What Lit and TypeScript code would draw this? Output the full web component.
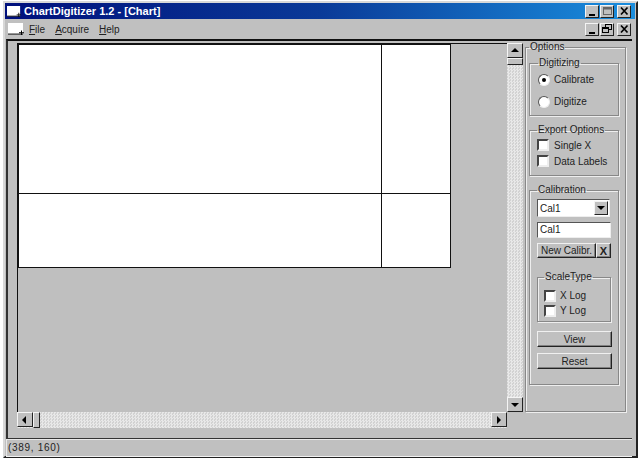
import { LitElement, html, css, svg } from "lit";
import { customElement } from "lit/decorators.js";

const winIcon = (w: number, h: number) => html`<svg class="appicon" width="${w}" height="${h}" viewBox="0 0 16 13" preserveAspectRatio="none">
  <rect x="0" y="0" width="15" height="12" fill="#fff"/>
  <path d="M0 12H15" stroke="#222" stroke-width="1.2"/>
  <path d="M11 10h2V8h1v2h2v1h-2v2h-1v-2h-2z" fill="#000"/>
</svg>`;

const glyph = (k: string) => {
  if (k === "min") return svg`<rect x="2" y="8" width="6" height="2" fill="#000"/>`;
  if (k === "max") return svg`<rect x="1.5" y="1.5" width="8" height="7" fill="none" stroke="#666"/><rect x="1.5" y="1.5" width="8" height="2" fill="#666"/>`;
  if (k === "restore") return svg`<rect x="3.5" y="0.5" width="6" height="5" fill="none" stroke="#000"/><rect x="0.5" y="3.5" width="6" height="5" fill="#c0c0c0" stroke="#000"/><rect x="0.5" y="3.5" width="6" height="1.5" fill="#000"/>`;
  return svg`<path d="M2 1.5L8.5 8.5M8.5 1.5L2 8.5" stroke="#000" stroke-width="1.7" fill="none"/>`;
};

const capBtn = (k: string) => html`<span class="cap raised ${k === "close" ? "gapl" : ""}"><svg width="11" height="10" viewBox="0 0 11 10">${glyph(k)}</svg></span>`;

const arrow = (d: string) => {
  const p: Record<string, string> = { up: "M4 1L0 5H8Z", down: "M0 2H8L4 6Z", left: "M5 0V8L1 4Z", right: "M2 0V8L6 4Z" };
  return html`<svg width="8" height="8" viewBox="0 0 8 8"><path d="${p[d]}" fill="#000"/></svg>`;
};

@customElement("app-root")
export class AppRoot extends LitElement {
  static styles = css`
    :host { display: block; width: 640px; height: 463px; background: #fff; overflow: hidden;
      font-family: "Liberation Sans", Arial, sans-serif; font-size: 10px; color: #222; }
    .window { box-sizing: border-box; height: 457px; margin: 1px 0 0 3px; width: 635px; background: #c0c0c0;
      border: 2px solid; border-color: #d8d8d8 #222 #222 #d8d8d8; display: flex; flex-direction: column; }
    .title { height: 16px; flex: none; background: linear-gradient(90deg, #00107c 0%, #0a3a98 50%, #1a8ede 100%);
      display: flex; align-items: center; padding: 0 4px 0 2px; margin-right: 1px; color: #fff; font-size: 11px; font-weight: 700; }
    .title .name { margin-left: 3px; flex: 1; }
    .appicon { flex: none; }
    .caps { display: flex; gap: 1px; }
    .cap { box-sizing: border-box; width: 14px; height: 13px; display: flex; align-items: center; justify-content: center; background: #c0c0c0; }
    .gapl { margin-left: 2px; }
    .raised { border: 1px solid; border-color: #f4f4f4 #222 #222 #f4f4f4; }
    .menu { height: 20px; flex: none; display: flex; align-items: center; padding: 0 5px 0 3px; }
    .menu .item { margin: 0 5px; }
    .menu .spacer { flex: 1; }
    .body { flex: 1; min-height: 0; display: flex; border-top: 2px solid #111; border-left: 2px solid #333; margin: 0 4px 0 1px; }
    .client { flex: none; box-sizing: border-box; width: 515px; display: flex; flex-direction: column; padding: 2px 0 0 9px; }
    .upper { flex: none; height: 369px; display: flex; }
    .canvas { flex: none; box-sizing: border-box; width: 490px; height: 369px; border: 1px solid #111; border-right: none; border-bottom: none; background: #bfbfbf; }
    .chart { box-sizing: border-box; width: 433px; height: 224px; background: #fff; border: 1px solid #111; display: grid; grid-template-columns: 363px 1fr; grid-template-rows: 149px 1fr; }
    .cell-a { border-right: 1px solid #111; border-bottom: 1px solid #111; }
    .cell-b { border-bottom: 1px solid #111; }
    .cell-c { border-right: 1px solid #111; }
    .vbar { flex: none; width: 16px; height: 369px; display: flex; flex-direction: column; background: repeating-conic-gradient(#e8e8e8 0 25%, #d2d2d2 0 50%) 0 0 / 3px 3px; }
    .sbtn { box-sizing: border-box; width: 16px; height: 15px; background: #c0c0c0; display: flex; align-items: center; justify-content: center; flex: none; }
    .vbar .thumb { box-sizing: border-box; height: 7px; width: 16px; background: #c0c0c0; flex: none; }
    .vbar .fill { flex: 1; }
    .hbar { flex: none; width: 490px; height: 16px; display: flex; background: repeating-conic-gradient(#e8e8e8 0 25%, #d2d2d2 0 50%) 0 0 / 3px 3px; }
    .hbar .thumb { box-sizing: border-box; width: 7px; height: 16px; background: #c0c0c0; flex: none; }
    .hbar .fill { flex: 1; }
    .options { flex: none; width: 101px; margin-left: 2px; }
    fieldset { box-sizing: border-box; border: 1px solid #888; box-shadow: 1px 1px 0 #eee, inset 1px 1px 0 #eee; margin: 0; padding: 0; min-width: 0; }
    legend { padding: 0 1px; margin-left: 0; line-height: 12px; white-space: nowrap; }
    .outer { height: 371px; padding: 4px 0 0 3px; width: 101px; }
    .dig { width: 90px; height: 59px; padding-left: 8px; }
    .exp { width: 90px; height: 52px; padding-left: 7px; margin-top: 8px; }
    .cal { width: 90px; height: 201px; padding-left: 7px; margin-top: 8px; }
    .row { display: flex; align-items: center; gap: 5px; white-space: nowrap; }
    .radio { box-sizing: border-box; width: 12px; height: 12px; border-radius: 50%; background: #fff; border: 1px solid; border-color: #555 #eee #eee #555; display: flex; align-items: center; justify-content: center; flex: none; }
    .radio i { width: 4px; height: 4px; background: #000; border-radius: 50%; }
    .check { box-sizing: border-box; width: 12px; height: 12px; background: #fff; border: 2px solid; border-color: #444 #eee #eee #444; flex: none; }
    .dig .row { height: 19px; gap: 4px; }
    .dig .r1 { margin-top: 1px; }
    .dig .r2 { margin-top: 3px; }
    .exp .row { height: 16px; }
    .exp .row:first-of-type { margin-top: 1px; }
    .combo { box-sizing: border-box; width: 73px; height: 18px; background: #fff; border: 1px solid; border-color: #555 #eee #eee #555; display: flex; align-items: center; padding-left: 2px; margin-top: 3px; }
    .combo span { flex: 1; }
    .combo .cb { box-sizing: border-box; flex: none; width: 14px; height: 14px; background: #c0c0c0; border: 1px solid; border-color: #f4f4f4 #222 #222 #f4f4f4; display: flex; align-items: center; justify-content: center; margin-right: 1px; }
    .input { box-sizing: border-box; width: 74px; height: 16px; background: #fff; border: 1px solid; border-color: #555 #eee #eee #555; padding-left: 2px; line-height: 14px; margin-top: 5px; }
    .btnrow { display: flex; margin-top: 5px; }
    .btn { box-sizing: border-box; background: #c0c0c0; border: 1px solid; border-color: #f0f0f0 #222 #222 #f0f0f0; box-shadow: inset -1px -1px 0 #808080; display: flex; align-items: center; justify-content: center; white-space: nowrap; }
    .btn.new { width: 59px; height: 15px; }
    .btn.x { width: 15px; height: 15px; font-weight: 700; font-size: 11px; }
    .scale { width: 74px; height: 51px; margin-top: 13px; padding-left: 6px; }
    .scale .row { height: 15px; gap: 4px; }
    .scale .row:first-of-type { margin-top: 5px; }
    .btn.wide { width: 75px; height: 16px; }
    .btn.view { margin-top: 9px; }
    .btn.reset { margin-top: 6px; }
    .status { height: 17px; flex: none; margin: 0 4px 0 1px; border-top: 1px solid #333; display: flex; align-items: center; padding-left: 2px; letter-spacing: 0.7px; box-shadow: inset 1px 1px 0 #e8e8e8, 0 1px 0 #f2f2f2; }
  `;

  render() {
    return html`<div class="window">
      <div class="title">${winIcon(14, 11)}<span class="name">ChartDigitizer 1.2 - [Chart]</span>
        <span class="caps">${capBtn("min")}${capBtn("max")}${capBtn("close")}</span></div>
      <div class="menu">${winIcon(16, 12)}
        <span class="item"><u>F</u>ile</span><span class="item"><u>A</u>cquire</span><span class="item"><u>H</u>elp</span>
        <span class="spacer"></span>
        <span class="caps">${capBtn("min")}${capBtn("restore")}${capBtn("close")}</span></div>
      <div class="body">
        <div class="client">
          <div class="upper">
            <div class="canvas"><div class="chart"><div class="cell-a"></div><div class="cell-b"></div><div class="cell-c"></div><div></div></div></div>
            <div class="vbar"><span class="sbtn raised">${arrow("up")}</span><span class="thumb raised"></span><span class="fill"></span><span class="sbtn raised">${arrow("down")}</span></div>
          </div>
          <div class="hbar"><span class="sbtn raised">${arrow("left")}</span><span class="thumb raised"></span><span class="fill"></span><span class="sbtn raised">${arrow("right")}</span></div>
        </div>
        <div class="options">
          <fieldset class="outer"><legend>Options</legend>
            <fieldset class="dig"><legend>Digitizing</legend>
              <div class="row r1"><span class="radio"><i></i></span>Calibrate</div>
              <div class="row r2"><span class="radio"></span>Digitize</div>
            </fieldset>
            <fieldset class="exp"><legend>Export Options</legend>
              <div class="row"><span class="check"></span>Single X</div>
              <div class="row"><span class="check"></span>Data Labels</div>
            </fieldset>
            <fieldset class="cal"><legend>Calibration</legend>
              <div class="combo"><span>Cal1</span><em class="cb">${arrow("down")}</em></div>
              <div class="input">Cal1</div>
              <div class="btnrow"><span class="btn new">New Calibr.</span><span class="btn x">X</span></div>
              <fieldset class="scale"><legend>ScaleType</legend>
                <div class="row"><span class="check"></span>X Log</div>
                <div class="row"><span class="check"></span>Y Log</div>
              </fieldset>
              <div class="btn wide view">View</div>
              <div class="btn wide reset">Reset</div>
            </fieldset>
          </fieldset>
        </div>
      </div>
      <div class="status">(389, 160)</div>
    </div>`;
  }
}
